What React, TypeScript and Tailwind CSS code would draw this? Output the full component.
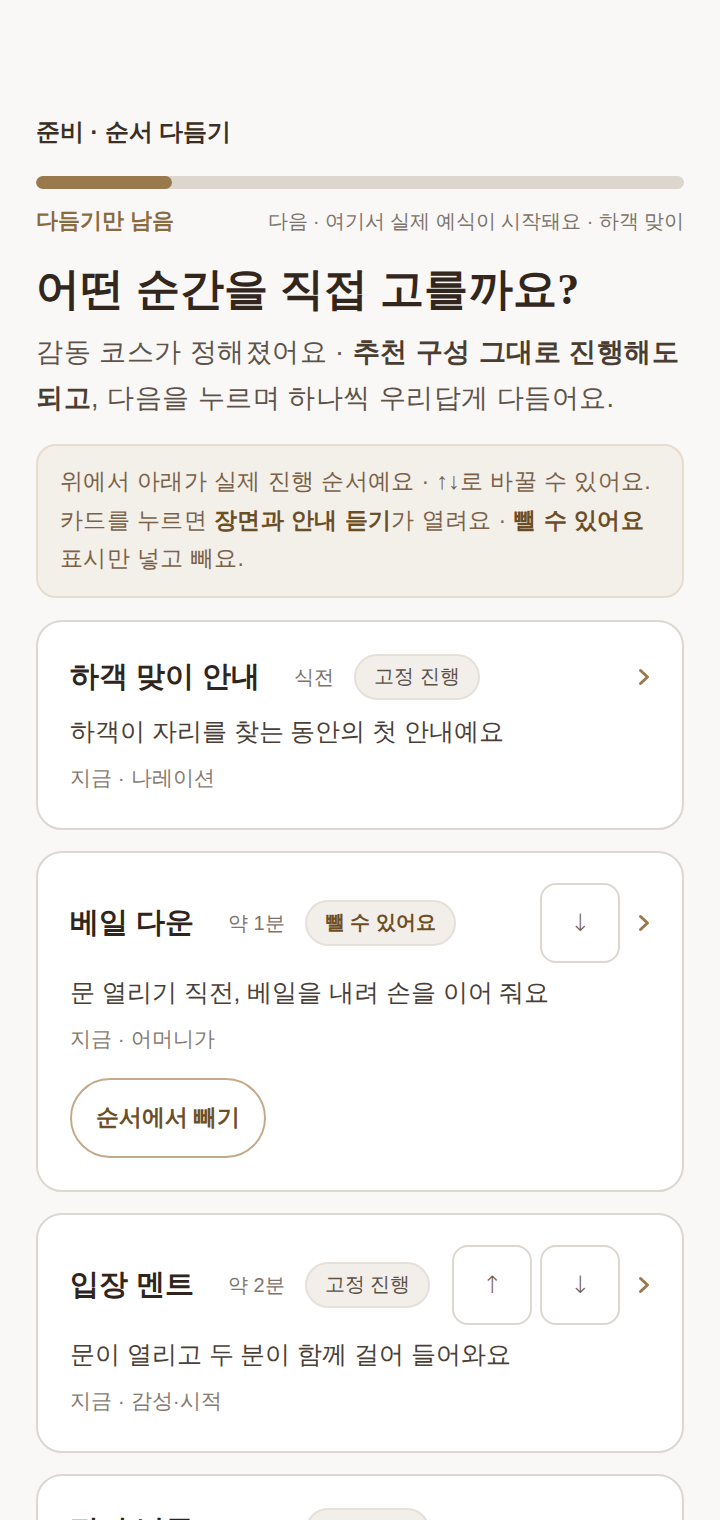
type Step = {
  title: string;
  meta: string;
  badge: string;
  removable?: boolean;
  desc: string;
  note: string;
  up?: boolean;
  down?: boolean;
};

const steps: Step[] = [
  {
    title: "하객 맞이 안내",
    meta: "식전",
    badge: "고정 진행",
    desc: "하객이 자리를 찾는 동안의 첫 안내예요",
    note: "지금 · 나레이션",
  },
  {
    title: "베일 다운",
    meta: "약 1분",
    badge: "뺄 수 있어요",
    removable: true,
    desc: "문 열리기 직전, 베일을 내려 손을 이어 줘요",
    note: "지금 · 어머니가",
    down: true,
  },
  {
    title: "입장 멘트",
    meta: "약 2분",
    badge: "고정 진행",
    desc: "문이 열리고 두 분이 함께 걸어 들어와요",
    note: "지금 · 감성·시적",
    up: true,
    down: true,
  },
  {
    title: "편지 낭독",
    meta: "약 3분",
    badge: "고정 진행",
    desc: "두 분이 서로에게 쓴 편지를 읽어요",
    note: "지금 · 신랑 신부",
  },
];

function Chevron() {
  return (
    <svg width="12" height="18" viewBox="0 0 12 18" className="ml-[10px] shrink-0 text-[#9a7a4c]">
      <path d="M2.5 2.5 L9.5 9 L2.5 15.5" fill="none" stroke="currentColor" strokeWidth="3" strokeLinecap="round" strokeLinejoin="round" />
    </svg>
  );
}

function MoveButton({ label }: { label: string }) {
  return (
    <button className="w-20 h-20 rounded-2xl border-2 border-[#ddd7d0] bg-white text-[24px] leading-none text-[#7a6248] font-['DejaVu_Sans',sans-serif] font-light">
      {label}
    </button>
  );
}

function StepCard({ step }: { step: Step }) {
  return (
    <div className="bg-white border-2 border-[#dcd7d0] rounded-[26px] px-8 pt-[30px] pb-[35px]">
      <div className="flex items-center min-h-[50px]">
        <h3 className="text-[29px] font-bold text-[#2f251c] leading-none">{step.title}</h3>
        <span className="ml-[34px] text-[20px] text-[#7d736b]">{step.meta}</span>
        <span
          className={
            step.removable
              ? "ml-5 h-[46px] px-[18px] flex items-center rounded-full bg-[#f2efea] border-2 border-[#e5e0d9] text-[19.5px] font-bold text-[#6e4f25]"
              : "ml-5 h-[46px] px-[18px] flex items-center rounded-full bg-[#f2efea] border-2 border-[#e5e0d9] text-[19.5px] text-[#5b5048]"
          }
        >
          {step.badge}
        </span>
        <div className="ml-auto flex items-center gap-2">
          {step.up && <MoveButton label="↑" />}
          {step.down && <MoveButton label="↓" />}
          <Chevron />
        </div>
      </div>
      <p className="mt-3 text-[24.5px] leading-[36px] text-[#4a3f37] break-keep">{step.desc}</p>
      <p className="mt-[12px] text-[21px] leading-[31px] text-[#857a70]">{step.note}</p>
      {step.removable && (
        <button className="mt-6 -mb-[3px] h-20 px-6 rounded-full border-2 border-[#c4a98a] bg-white text-[22.5px] font-bold text-[#6e4f25]">
          순서에서 빼기
        </button>
      )}
    </div>
  );
}

export default function App() {
  return (
    <div className="min-h-[1520px] bg-[#f9f8f6] px-9 pt-[115px] font-['Liberation_Sans',sans-serif]">
      <div className="text-[23.5px] leading-[34px] font-bold text-[#3b2f25]">준비 · 순서 다듬기</div>

      <div className="mt-[27px] h-[13px] rounded-full bg-[#dcd6cf] overflow-hidden">
        <div className="h-full w-[21%] rounded-full bg-[#9a7a4c]" />
      </div>

      <div className="mt-[16px] flex items-center justify-between">
        <span className="text-[21.5px] font-bold text-[#8a6a3f]">다듬기만 남음</span>
        <span className="text-[19.5px] text-[#7d736b]">다음 · 여기서 실제 예식이 시작돼요 · 하객 맞이</span>
      </div>

      <h1 className="mt-[23px] text-[44px] tracking-[0.3px] leading-[60px] font-bold text-[#33271d] font-['Liberation_Serif',serif]">
        어떤 순간을 직접 고를까요?
      </h1>

      <p className="mt-[9px] text-[27px] tracking-[0.5px] leading-[46px] text-[#5e534a] break-keep">
        감동 코스가 정해졌어요 · <b className="text-[#4a3d32]">추천 구성 그대로 진행해도 되고</b>, 다음을 누르며 하나씩 우리답게 다듬어요.
      </p>

      <div className="mt-[23px] rounded-[20px] bg-[#f3efe9] border-2 border-[#e6dccf] px-[22px] pt-[16px] pb-[18px] text-[23px] tracking-[0.4px] leading-[38.5px] text-[#7a6248] break-keep">
        위에서 아래가 실제 진행 순서예요 · ↑↓로 바꿀 수 있어요. 카드를 누르면{" "}
        <b className="text-[#6b4e26]">장면과 안내 듣기</b>가 열려요 · <b className="text-[#6b4e26]">뺄 수 있어요</b> 표시만 넣고 빼요.
      </div>

      <div className="mt-[22px] flex flex-col gap-[21px] pb-10">
        {steps.map((s) => (
          <StepCard key={s.title} step={s} />
        ))}
      </div>
    </div>
  );
}
